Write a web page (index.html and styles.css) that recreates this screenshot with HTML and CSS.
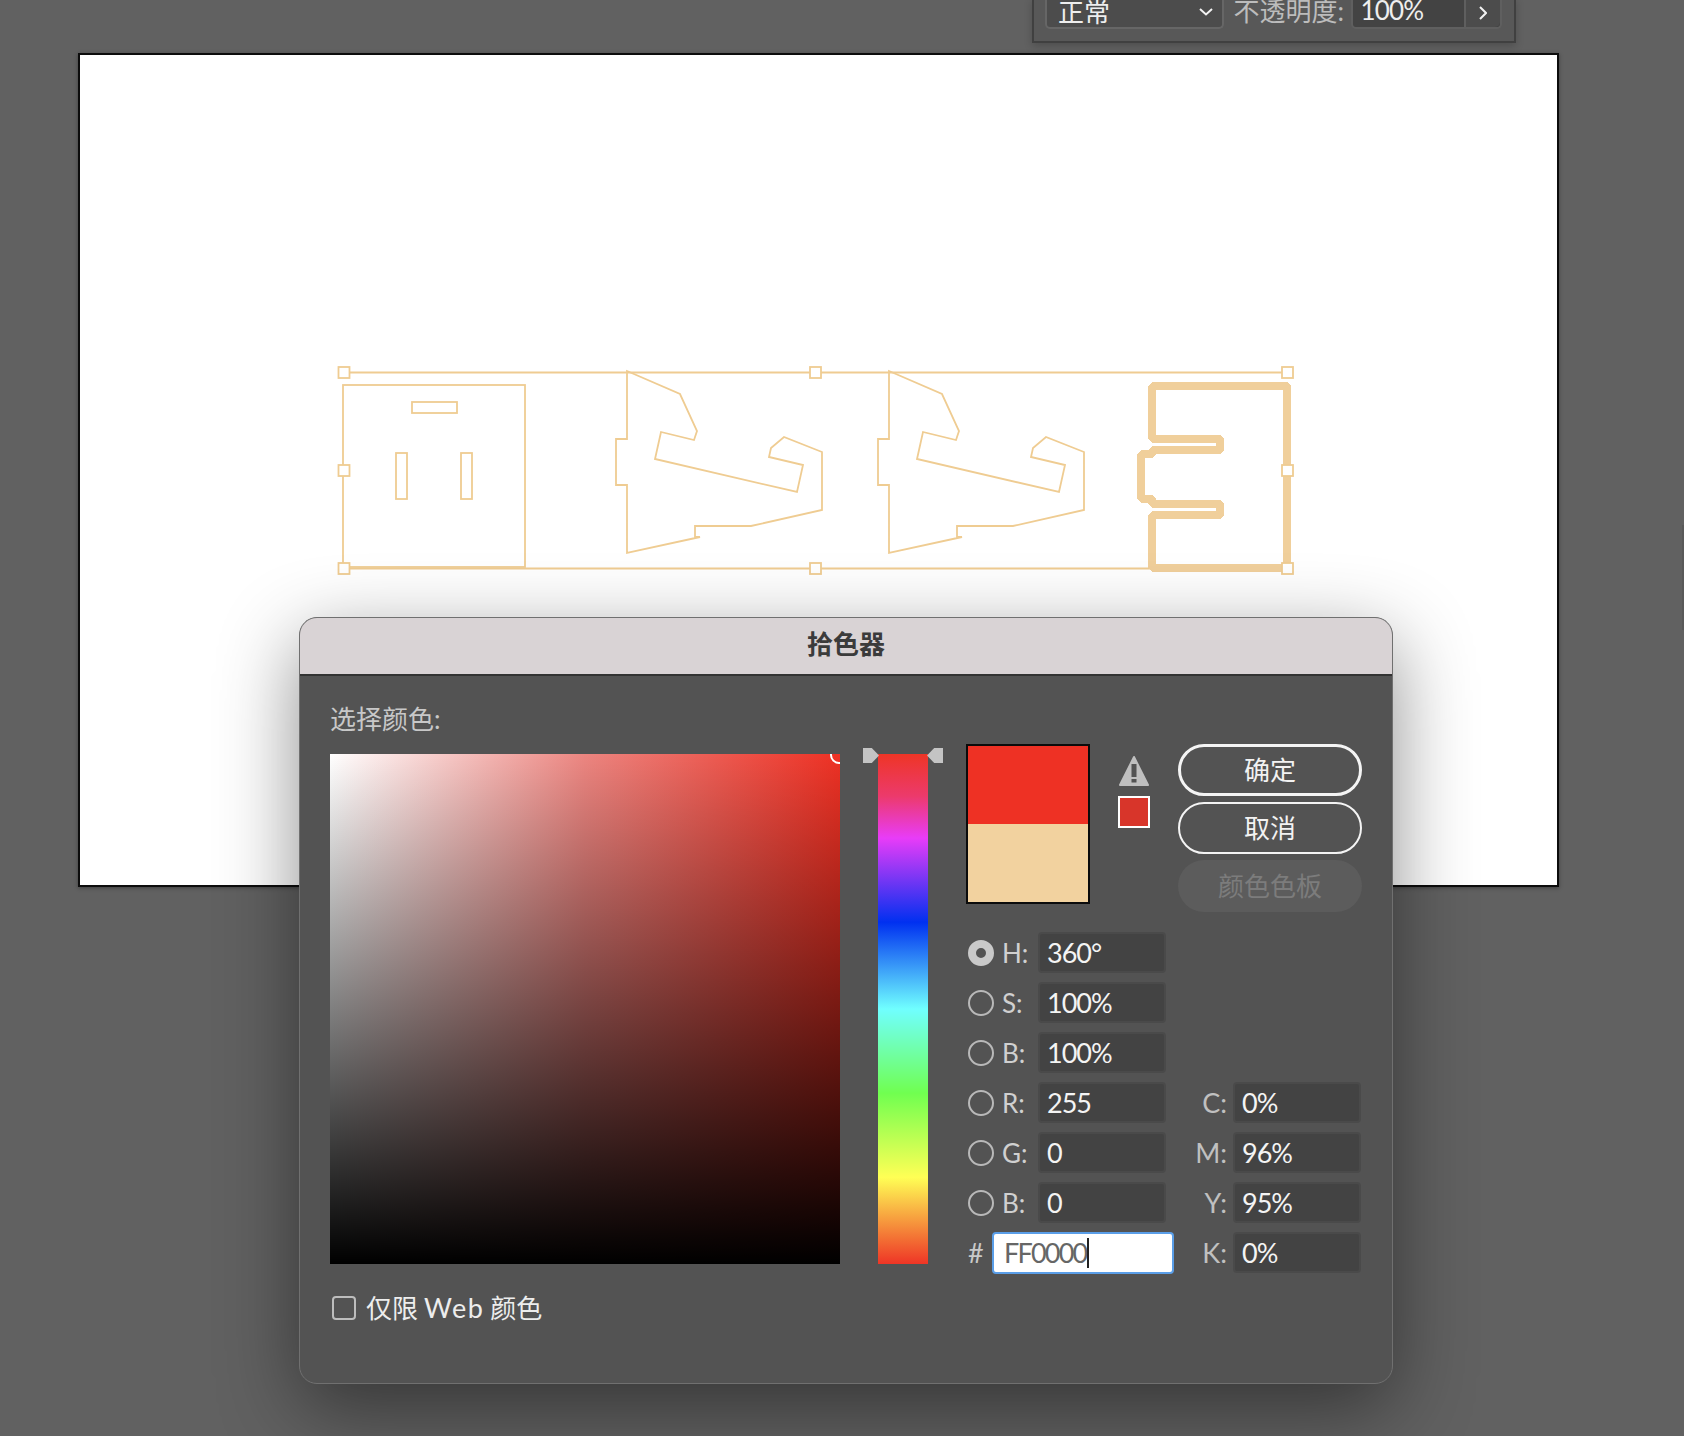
FILE: index.html
```html
<!DOCTYPE html>
<html lang="zh-CN">
    <head>
        <meta charset="UTF-8" />
        <title>拾色器</title>
        <link rel="stylesheet" href="styles.css">
    </head>
    <body>
        <div class="artboard">
            <svg class="art" viewBox="0 0 1479 831" width="1479" height="831">
                <defs>
                    <path id="bracket" d="M548 316 L601 339 L618 376 L615 385 L582 377 L576 404 L718 437 L724 410 L690 402 L692 393 L705 382 L743 397 V455 L672 471 H616 V482 H621 L548 498 V430 H537 V384 H548 Z" />
                </defs>
                <g class="thin">
                    <path d="M264 317.500 H1209 M264 513.500 H1209" />
                    <rect x="264" y="330" width="182" height="182" />
                    <rect x="333" y="347" width="45" height="11" />
                    <rect x="317" y="398" width="11" height="46" />
                    <rect x="382" y="398" width="11" height="46" />
                    <use href="#bracket" />
                    <use href="#bracket" x="262" />
                </g>
                <path class="thick" d="M1073 331 H1208 V513 H1073 V460 H1141 V449 H1073 V444 H1062 V399 H1073 V395 H1141 V384 H1073 Z" />
                <g class="handles">
                    <rect x="259.500" y="312" width="11" height="11" />
                    <rect x="731" y="312" width="11" height="11" />
                    <rect x="1203" y="312" width="11" height="11" />
                    <rect x="259.500" y="410" width="11" height="11" />
                    <rect x="1203" y="410" width="11" height="11" />
                    <rect x="259.500" y="508" width="11" height="11" />
                    <rect x="731" y="508" width="11" height="11" />
                    <rect x="1203" y="508" width="11" height="11" />
                </g>
            </svg>
        </div>
        <div class="edgeShade"></div>

        <div class="blendBar">
            <div class="blendSelect">
                <span>正常</span>
                <svg width="14" height="8" viewBox="0 0 14 8"><path d="M1 1 L7 6.500 L13 1" /></svg>
            </div>
            <span class="blendLabel">不透明度:</span>
            <div class="opacityBox">
                <span class="opacityValue">100%</span>
                <span class="opacityArrow">
                    <svg width="8" height="14" viewBox="0 0 8 14"><path d="M1 1 L7 7 L1 13" /></svg>
                </span>
            </div>
        </div>

        <div class="picker">
            <div class="pickerTitle">拾色器</div>
            <div class="pickerBody">
                <div class="leftCol">
                    <p class="chooseLabel">选择颜色:</p>
                    <div class="fieldRow">
                        <div class="colorField"><i class="fieldDot"></i></div>
                        <div class="hueWrap">
                            <i class="hueArrow hueArrowL"></i>
                            <div class="hueBar"></div>
                            <i class="hueArrow hueArrowR"></i>
                        </div>
                    </div>
                    <label class="webOnly"><i class="checkBox"></i>仅限<span class="webWord">Web</span>颜色</label>
                </div>
                <div class="rightCol">
                    <div class="topRow">
                        <div class="swatch">
                            <div class="swatchNew"></div>
                            <div class="swatchOld"></div>
                        </div>
                        <div class="gamut">
                            <svg width="32" height="32" viewBox="0 0 32 32">
                                <path class="warnTri" d="M16 2 L30 30 H2 Z" />
                                <rect class="warnMark" x="13.500" y="9" width="5" height="13" />
                                <rect class="warnMark" x="13.500" y="24" width="5" height="3.500" />
                            </svg>
                            <div class="gamutChip"></div>
                        </div>
                        <div class="btns">
                            <div class="btn btnMain">确定</div>
                            <div class="btn">取消</div>
                            <div class="btn btnOff">颜色色板</div>
                        </div>
                    </div>
                    <div class="values">
                        <div class="row"><i class="radio on"></i><span class="key">H:</span><span class="val">360°</span></div>
                        <div class="row"><i class="radio"></i><span class="key">S:</span><span class="val">100%</span></div>
                        <div class="row"><i class="radio"></i><span class="key">B:</span><span class="val">100%</span></div>
                        <div class="row"><i class="radio"></i><span class="key">R:</span><span class="val">255</span><span class="key keyR">C:</span><span class="val">0%</span></div>
                        <div class="row"><i class="radio"></i><span class="key">G:</span><span class="val">0</span><span class="key keyR">M:</span><span class="val">96%</span></div>
                        <div class="row"><i class="radio"></i><span class="key">B:</span><span class="val">0</span><span class="key keyR">Y:</span><span class="val">95%</span></div>
                        <div class="row"><span class="hash">#</span><span class="hexInput">FF0000<i class="caret"></i></span><span class="key keyR keyK">K:</span><span class="val">0%</span></div>
                    </div>
                </div>
            </div>
        </div>
    </body>
</html>
```

FILE: styles.css
```css
html, body {
    margin: 0;
    height: 1436px;
    overflow: hidden;
}
body {
    background-color: #616161;
    padding: 53px 0 0 78px;
    box-sizing: border-box;
    font-family: "Lato", "Noto Sans CJK SC", sans-serif;
    position: relative;
}
i {
    display: block;
    font-style: normal;
}

/* artboard */
.artboard {
    width: 1481px;
    height: 834px;
    box-sizing: border-box;
    background-color: #fff;
    border: 2px solid #0c0c0c;
    box-shadow: 0 1px 4px rgba(0, 0, 0, 0.35);
    overflow: hidden;
}
.art {
    display: block;
    margin: 0 0 0 -1px;
    fill: none;
}
.thin {
    stroke: #efcc92;
    stroke-width: 1.800;
    fill: none;
}
.thick {
    stroke: #f0cf9b;
    stroke-width: 8;
    stroke-linejoin: bevel;
    fill: none;
    shape-rendering: crispEdges;
}
.handles rect {
    fill: #fff;
    stroke: #efcc92;
    stroke-width: 1.800;
}
.edgeShade {
    position: absolute;
    right: 0;
    top: 525px;
    width: 2px;
    height: 105px;
    background-color: #595959;
}

/* transparency bar at the top */
.blendBar {
    position: absolute;
    left: 1032px;
    top: -2px;
    width: 484px;
    height: 45px;
    box-sizing: border-box;
    padding: 0 12px 12px 11px;
    display: flex;
    align-items: stretch;
    background-color: #585858;
    border: 2px solid #404040;
    border-top: none;
    box-shadow: 0 3px 8px rgba(0, 0, 0, 0.2);
    font-size: 26px;
    color: #eee;
}
.blendSelect {
    width: 180px;
    box-sizing: border-box;
    padding: 0 9px 5px 11px;
    display: flex;
    align-items: center;
    justify-content: space-between;
    background-color: #4c4c4c;
    border: 2px solid #666;
    border-top: none;
    border-radius: 0 0 5px 5px;
}
.blendSelect svg, .opacityArrow svg {
    fill: none;
    stroke: #f2f2f2;
    stroke-width: 2;
}
.blendSelect svg {
    margin-top: 4px;
}
.blendLabel {
    margin-left: 10px;
    width: 119px;
    color: #bcbcbc;
    line-height: 27px;
    white-space: nowrap;
}
.opacityBox {
    width: 148px;
    display: flex;
    background-color: #434343;
    border: 2px solid #5f5f5f;
    border-top: none;
    border-radius: 0 0 5px 5px;
}
.opacityValue {
    width: 111px;
    padding-left: 7px;
    box-sizing: border-box;
    line-height: 24px;
    letter-spacing: -0.800px;
}
.opacityArrow {
    flex: 1;
    display: flex;
    align-items: center;
    justify-content: center;
    background-color: #4c4c4c;
    border-left: 2px solid #5f5f5f;
    border-radius: 0 0 5px 0;
}

/* colour picker dialog */
.picker {
    position: absolute;
    left: 299px;
    top: 617px;
    width: 1094px;
    height: 767px;
    box-sizing: border-box;
    background-color: #535353;
    border: 1px solid #707070;
    border-radius: 18px;
    box-shadow: 0 24px 80px rgba(0, 0, 0, 0.45);
    overflow: hidden;
}
.pickerTitle {
    height: 58px;
    box-sizing: border-box;
    background-color: #d9d3d5;
    border-bottom: 2px solid #333;
    color: #3b3b3b;
    font-size: 26px;
    font-weight: bold;
    line-height: 52px;
    text-align: center;
}
.pickerBody {
    display: flex;
    padding-left: 30px;
}
.leftCol {
    width: 636px;
}
.chooseLabel {
    margin: 0;
    height: 78px;
    padding-top: 26px;
    box-sizing: border-box;
    color: #c8c8c8;
    font-size: 26px;
    line-height: 34px;
}
.fieldRow {
    display: flex;
    height: 510px;
}
.colorField {
    width: 510px;
    height: 510px;
    position: relative;
    overflow: hidden;
    background: linear-gradient(to top, #000, rgba(0, 0, 0, 0)),
        linear-gradient(to right, #fff, #ec8580 50%, #ee3124);
}
.fieldDot {
    position: absolute;
    right: -8px;
    top: -8px;
    width: 14px;
    height: 14px;
    border: 2px solid #fff;
    border-radius: 50%;
}
.hueWrap {
    position: relative;
    margin-left: 38px;
    width: 50px;
}
.hueBar {
    height: 510px;
    background: linear-gradient(
        to bottom,
        #ee3526 0,
        #ec3a6c 8.300%,
        #e83cf8 16.500%,
        #0030f0 33%,
        #70ffff 50%,
        #70ff50 66.500%,
        #ffff55 83%,
        #ee3526 100%
    );
}
.hueArrow {
    position: absolute;
    top: -6px;
    width: 16px;
    height: 15px;
    background-color: #c4c4c4;
}
.hueArrowL {
    left: -15px;
    clip-path: polygon(0 0, 55% 0, 100% 50%, 55% 100%, 0 100%);
}
.hueArrowR {
    right: -15px;
    clip-path: polygon(100% 0, 45% 0, 0 50%, 45% 100%, 100% 100%);
}
.webOnly {
    display: flex;
    align-items: center;
    margin-top: 26px;
    margin-left: 2px;
    color: #ededed;
    font-size: 26px;
    line-height: 36px;
}
.webWord {
    margin: 0 6px;
    font-size: 27px;
    letter-spacing: 1.500px;
}
.checkBox {
    width: 24px;
    height: 24px;
    box-sizing: border-box;
    margin-right: 10px;
    border: 2px solid #bdbdbd;
    border-radius: 4px;
}

.rightCol {
    width: 396px;
}
.topRow {
    display: flex;
    height: 237px;
    padding-top: 68px;
    box-sizing: border-box;
}
.swatch {
    width: 124px;
    height: 160px;
    box-sizing: border-box;
    border: 2px solid #0b0b0b;
}
.swatchNew {
    height: 78px;
    background-color: #ee3124;
}
.swatchOld {
    height: 78px;
    background-color: #f2d29f;
}
.gamut {
    margin-left: 28px;
    width: 32px;
    padding-top: 11px;
}
.gamut svg {
    display: block;
}
.warnTri {
    fill: #bfbfbf;
    stroke: #bfbfbf;
    stroke-width: 2;
    stroke-linejoin: round;
}
.warnMark {
    fill: #535353;
}
.gamutChip {
    margin-top: 9px;
    width: 32px;
    height: 32px;
    box-sizing: border-box;
    background-color: #d8352a;
    border: 2px solid #fff;
}
.btns {
    margin-left: 28px;
    width: 184px;
    display: flex;
    flex-direction: column;
    gap: 6px;
}
.btn {
    height: 52px;
    box-sizing: border-box;
    border: 2px solid #f4f4f4;
    border-radius: 26px;
    color: #f2f2f2;
    font-size: 26px;
    line-height: 49px;
    text-align: center;
}
.btnMain {
    border-width: 3.500px;
    line-height: 46px;
}
.btnOff {
    background-color: #5c5c5c;
    border: none;
    color: #7c7c7c;
    line-height: 53px;
}

.values {
    padding-left: 2px;
    margin-top: 19px;
    display: flex;
    flex-direction: column;
    gap: 9px;
}
.row {
    display: flex;
    align-items: center;
    height: 41px;
}
.radio {
    width: 26px;
    height: 26px;
    box-sizing: border-box;
    border: 2px solid #b9b9b9;
    border-radius: 50%;
}
.radio.on {
    background-color: #535353;
    border: 8px solid #c9c9c9;
}
.key {
    width: 44px;
    padding-left: 8px;
    box-sizing: border-box;
    color: #d0d0d0;
    font-size: 26px;
}
.keyR {
    width: 67px;
    padding: 0 6px 0 0;
    font-size: 27px;
    color: #c0c0c0;
    text-align: right;
}
.keyK {
    width: 59px;
}
.val {
    width: 128px;
    height: 41px;
    box-sizing: border-box;
    padding-left: 7px;
    background-color: #434343;
    border: 2px solid #4a4a4a;
    border-radius: 4px;
    color: #f4f4f4;
    font-size: 27px;
    letter-spacing: -1px;
    line-height: 37px;
}
.hash {
    width: 24px;
    color: #c9c9c9;
    font-size: 27px;
}
.hexInput {
    width: 182px;
    height: 42px;
    box-sizing: border-box;
    padding-left: 10px;
    display: flex;
    align-items: center;
    background-color: #fff;
    border: 2px solid #5a9ee8;
    border-radius: 4px;
    color: #666;
    font-size: 27px;
    letter-spacing: -1.800px;
}
.caret {
    width: 2px;
    height: 30px;
    margin-left: 1px;
    background-color: #222;
}
```
